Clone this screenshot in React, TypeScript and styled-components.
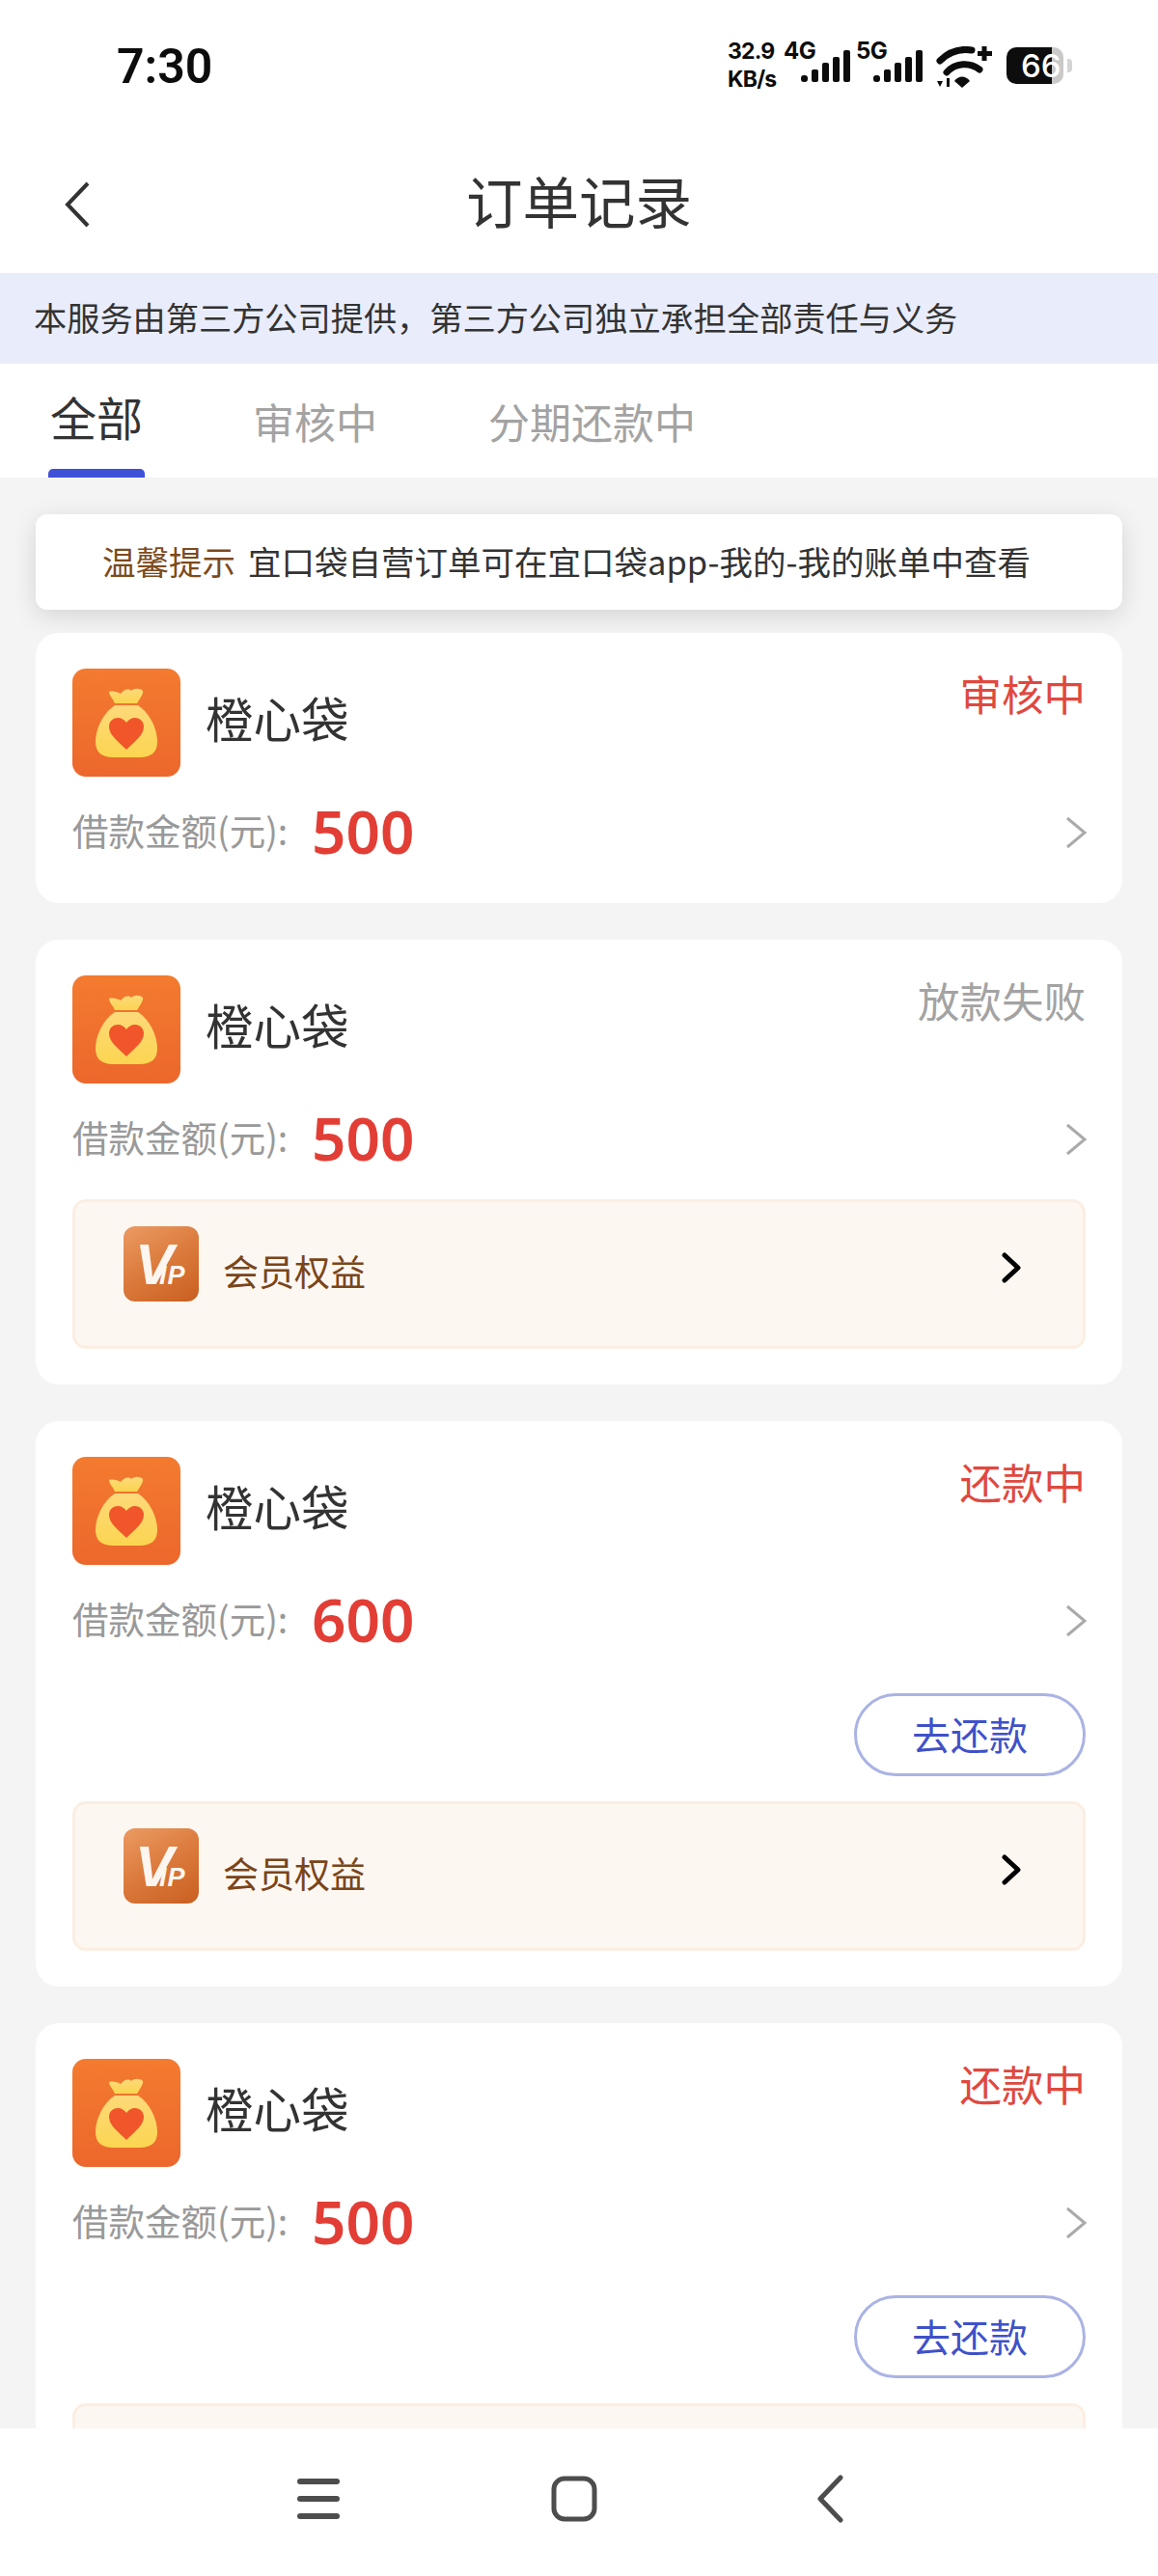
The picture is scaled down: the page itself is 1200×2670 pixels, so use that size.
import React from "react";
import styled, { createGlobalStyle } from "styled-components";

const Global = createGlobalStyle`
  html, body { margin: 0; padding: 0; background: #fff; }
  * { box-sizing: border-box; }
`;

const CJK = `"Noto Sans CJK SC", "Noto Sans", sans-serif`;

const Screen = styled.div`
  width: 1200px;
  height: 2670px;
  display: flex;
  flex-direction: column;
  overflow: hidden;
  background: #f4f4f4;
  font-family: ${CJK};
`;

const StatusBar = styled.div`
  height: 140px;
  flex: none;
  background: #fff;
  display: flex;
  align-items: flex-start;
  justify-content: space-between;
  padding: 44px 89px 0 121px;
  font-family: Inter, sans-serif;
  color: #0c0c0c;
`;

const Time = styled.div`
  font-family: Roboto, sans-serif;
  font-size: 50px;
  line-height: 50px;
  font-weight: 600;
`;

const StatusIcons = styled.div`
  display: flex;
  align-items: flex-start;
  gap: 6px;
`;

const Speed = styled.div`
  width: 52px;
  display: flex;
  flex-direction: column;
  gap: 5px;
  font-size: 23px;
  line-height: 24px;
  font-weight: 700;
  white-space: nowrap;
  letter-spacing: -0.8px;
  margin-top: -3px;
`;

const Signal = styled.div`
  position: relative;
  width: 69px;
  height: 41px;
  display: flex;
  justify-content: flex-end;
  align-items: flex-end;
`;

const NetLabel = styled.span`
  position: absolute;
  left: 0;
  top: -3px;
  font-size: 24px;
  line-height: 24px;
  font-weight: 700;
  letter-spacing: -0.6px;
`;

const WifiWrap = styled.div`
  display: flex;
  margin: 4px 0 0 8px;
`;

const Battery = styled.div`
  position: relative;
  width: 68px;
  height: 38px;
  margin: 5px 0 0 9px;
`;

const BatteryBody = styled.div`
  width: 59px;
  height: 38px;
  border-radius: 10px;
  overflow: hidden;
  background: linear-gradient(90deg, #0d0d0d 0 47px, #c9c9c9 47px 59px);
  color: #fff;
  font-size: 33px;
  line-height: 38px;
  font-weight: 500;
  padding-left: 15px;
  white-space: nowrap;
`;

const BatteryNub = styled.div`
  position: absolute;
  right: 0;
  top: 12px;
  width: 5px;
  height: 14px;
  border-radius: 0 4px 4px 0;
  background: #d4d4d4;
`;

const NavBar = styled.div`
  position: relative;
  height: 143px;
  flex: none;
  background: #fff;
  display: flex;
  align-items: center;
  justify-content: center;
  padding-bottom: 10px;
`;

const BackButton = styled.div`
  position: absolute;
  left: 66px;
  top: 48px;
  display: flex;
`;

const Title = styled.h1`
  margin: 0;
  font-size: 58.5px;
  line-height: 80px;
  font-weight: 400;
  color: #333;
`;

const Notice = styled.div`
  height: 94px;
  flex: none;
  background: #e9edfb;
  color: #333;
  font-size: 34.2px;
  line-height: 90px;
  padding-left: 35px;
  white-space: nowrap;
`;

const Tabs = styled.div`
  height: 118px;
  flex: none;
  background: #fff;
  display: flex;
  align-items: flex-start;
  padding-left: 50px;
  gap: 115px;
`;

const Tab = styled.div<{ $active?: boolean }>`
  position: relative;
  height: 118px;
  padding: ${(p) => (p.$active ? "24px 2px 0" : "29px 0 0")};
  margin-right: ${(p) => (p.$active ? "-3px" : "0")};
  font-size: ${(p) => (p.$active ? "48px" : "43px")};
  line-height: 60px;
  color: ${(p) => (p.$active ? "#333" : "#a3a3a3")};
`;

const TabLine = styled.div`
  position: absolute;
  left: 0;
  right: 0;
  bottom: 0;
  height: 9px;
  border-radius: 5px 5px 0 0;
  background: #3f51d6;
`;

const List = styled.div`
  flex: 1;
  min-height: 0;
  overflow: hidden;
  padding: 38px 37px 0;
  display: flex;
  flex-direction: column;
`;

const Tip = styled.div`
  flex: none;
  height: 99px;
  margin-bottom: 24px;
  padding: 0 0 4px 69px;
  border-radius: 12px;
  background: #fff;
  box-shadow: 0 6px 26px rgba(0, 0, 0, 0.13);
  display: flex;
  align-items: center;
  gap: 13px;
  font-size: 34.5px;
  color: #333;
  white-space: nowrap;
`;

const TipLabel = styled.span`
  color: #7c4a1c;
`;

const Card = styled.div`
  flex: none;
  display: flex;
  flex-direction: column;
  background: #fff;
  border-radius: 24px;
  padding: 37px 38px 37px;
  margin-bottom: 38px;
`;

const CardHead = styled.div`
  display: flex;
  align-items: flex-start;
`;

const LogoWrap = styled.div`
  width: 112px;
  height: 112px;
  flex: none;
  display: flex;
`;

const CardName = styled.div`
  font-size: 49.5px;
  line-height: 70px;
  margin: 16px 0 0 26px;
  color: #333;
  flex: 1;
`;

const Status = styled.div<{ $color: string }>`
  font-size: 43.5px;
  line-height: 56px;
  margin-top: -2px;
  color: ${(p) => p.$color};
`;

const AmountRow = styled.div`
  display: flex;
  align-items: center;
  height: 60px;
  margin: 28px 0 6px;
`;

const AmountLabel = styled.div`
  font-size: 37.5px;
  line-height: 60px;
  margin-top: -6px;
  color: #999;
  white-space: nowrap;
  width: 248px;
`;

const AmountValue = styled.div`
  flex: 1;
  font-family: "Noto Sans", sans-serif;
  font-weight: 600;
  font-size: 62px;
  line-height: 60px;
  margin-top: -4px;
  color: #e23e35;
`;

const Chevron = styled.svg`
  flex: none;
  display: block;
`;

const VipChevron = styled(Chevron)`
  margin-top: -13px;
`;

const ActionRow = styled.div`
  display: flex;
  justify-content: flex-end;
  margin-top: 39px;
`;

const PayButton = styled.div`
  width: 240px;
  height: 86px;
  border: 3px solid #aab3e4;
  border-radius: 43px;
  display: flex;
  align-items: center;
  justify-content: center;
  padding-bottom: 3px;
  font-size: 40px;
  color: #3f51c9;
`;

const VipBox = styled.div`
  height: 155px;
  margin-top: 26px;
  padding: 0 64px 0 50px;
  display: flex;
  align-items: center;
  background: #fdf7f1;
  border: 3px solid #fbeee2;
  border-radius: 14px;
`;

const VipIcon = styled.div`
  position: relative;
  width: 78px;
  height: 78px;
  flex: none;
  margin-top: -21px;
  border-radius: 12px;
  overflow: hidden;
  background: linear-gradient(150deg, #eb9b63 0%, #db7a3c 50%, #c95f20 100%);
  color: #fdf6f0;
  font-family: "Liberation Sans", sans-serif;
  font-weight: 700;
  font-style: italic;
`;

const VipV = styled.span`
  position: absolute;
  left: 12px;
  top: 10px;
  font-size: 60px;
  line-height: 60px;
`;

const VipIP = styled.span`
  position: absolute;
  left: 37px;
  top: 38px;
  font-size: 27px;
  line-height: 27px;
  letter-spacing: 1px;
`;

const VipText = styled.div`
  flex: 1;
  margin: -8px 0 0 25px;
  font-size: 37px;
  line-height: 50px;
  color: #7a4519;
`;

const BottomBar = styled.div`
  height: 153px;
  flex: none;
  background: #fff;
  display: grid;
  grid-template-columns: repeat(3, 265px);
  justify-content: center;
  justify-items: center;
  align-items: center;
  padding: 0 10px 8px 0;
`;

const BagLogo = ({ id }: { id: string }) => (
  <svg width="112" height="112" viewBox="0 0 112 112">
    <defs>
      <linearGradient id={`${id}bg`} x1="0" y1="0" x2="0" y2="1">
        <stop offset="0" stopColor="#f37b2f" />
        <stop offset="1" stopColor="#ec672c" />
      </linearGradient>
      <linearGradient id={`${id}bag`} x1="0" y1="0" x2="0" y2="1">
        <stop offset="0" stopColor="#fdd97a" />
        <stop offset="1" stopColor="#fbd550" />
      </linearGradient>
    </defs>
    <rect width="112" height="112" rx="14" fill={`url(#${id}bg)`} />
    <path
      d="M38 24c4-1 9 0 12 2 3-4 8-6 11-3 3-3 9-3 12 0 1 3-3 8-6 13H44c-2-5-6-8-6-12z"
      fill={`url(#${id}bag)`}
    />
    <path
      d="M44 38h24c12 8 20 24 20 38 0 11-7 16-18 16H42C31 92 24 87 24 76c0-14 8-30 20-38z"
      fill={`url(#${id}bag)`}
    />
    <path
      d="M56 84C47 75 38 69 38 60c0-6 5-9 9-9 4 0 7 2 9 5 2-3 5-5 9-5 5 0 9 4 9 9 0 9-9 15-18 24z"
      fill="#f0562a"
    />
  </svg>
);

const GrayChevron = () => (
  <Chevron width="24" height="34" viewBox="0 0 24 34" style={{ marginRight: -2 }}>
    <path d="M3 2l18 15L3 32" fill="none" stroke="#aaa" strokeWidth="3" />
  </Chevron>
);

const BlackChevron = () => (
  <VipChevron width="20" height="32" viewBox="0 0 20 32">
    <path d="M3 3l14 13L3 29" fill="none" stroke="#000" strokeWidth="5" strokeLinecap="round" strokeLinejoin="round" />
  </VipChevron>
);

const SignalBars = () => (
  <svg width="51" height="33" viewBox="0 0 51 33">
    <rect x="0" y="26" width="7" height="7" rx="3" fill="#0c0c0c" />
    <rect x="11" y="20" width="7" height="13" rx="2" fill="#0c0c0c" />
    <rect x="22" y="13" width="7" height="20" rx="2" fill="#0c0c0c" />
    <rect x="33" y="7" width="7" height="26" rx="2" fill="#0c0c0c" />
    <rect x="44" y="0" width="7" height="33" rx="2" fill="#0c0c0c" />
  </svg>
);

const Wifi = () => (
  <svg width="58" height="44" viewBox="0 0 58 44">
    <g fill="none" stroke="#0c0c0c" strokeLinecap="round">
      <path d="M4 15C13 6 25 2 37 4" strokeWidth="7" />
      <path d="M11 27C20 17 35 16 45 24" strokeWidth="7" />
    </g>
    <path d="M19 36c4-6 12-6 16 0l-8 7z" fill="#0c0c0c" />
    <path d="M50 0v15M43 7.500h15" stroke="#0c0c0c" strokeWidth="5" />
    <path d="M1 36h6l-3 6zM11 33h3v9h-3z" fill="#0c0c0c" />
  </svg>
);

const Order = ({
  id,
  status,
  color,
  amount,
  pay,
  vip,
}: {
  id: string;
  status: string;
  color: string;
  amount: string;
  pay?: boolean;
  vip?: boolean;
}) => (
  <Card>
    <CardHead>
      <LogoWrap>
        <BagLogo id={id} />
      </LogoWrap>
      <CardName>橙心袋</CardName>
      <Status $color={color}>{status}</Status>
    </CardHead>
    <AmountRow>
      <AmountLabel>借款金额(元):</AmountLabel>
      <AmountValue>{amount}</AmountValue>
      <GrayChevron />
    </AmountRow>
    {pay && (
      <ActionRow>
        <PayButton>去还款</PayButton>
      </ActionRow>
    )}
    {vip && (
      <VipBox>
        <VipIcon>
          <VipV>V</VipV>
          <VipIP>IP</VipIP>
        </VipIcon>
        <VipText>会员权益</VipText>
        <BlackChevron />
      </VipBox>
    )}
  </Card>
);

export default function App() {
  return (
    <Screen>
      <Global />
      <StatusBar>
        <Time>7:30</Time>
        <StatusIcons>
          <Speed>
            <span>32.9</span>
            <span>KB/s</span>
          </Speed>
          <Signal>
            <NetLabel>4G</NetLabel>
            <SignalBars />
          </Signal>
          <Signal>
            <NetLabel>5G</NetLabel>
            <SignalBars />
          </Signal>
          <WifiWrap>
            <Wifi />
          </WifiWrap>
          <Battery>
            <BatteryBody>66</BatteryBody>
            <BatteryNub />
          </Battery>
        </StatusIcons>
      </StatusBar>
      <NavBar>
        <BackButton>
          <svg width="28" height="48" viewBox="0 0 28 48">
            <path d="M25 2L4 24l21 22" fill="none" stroke="#333" strokeWidth="4" />
          </svg>
        </BackButton>
        <Title>订单记录</Title>
      </NavBar>
      <Notice>本服务由第三方公司提供，第三方公司独立承担全部责任与义务</Notice>
      <Tabs>
        <Tab $active>
          全部
          <TabLine />
        </Tab>
        <Tab>审核中</Tab>
        <Tab>分期还款中</Tab>
      </Tabs>
      <List>
        <Tip>
          <TipLabel>温馨提示</TipLabel>
          <span>宜口袋自营订单可在宜口袋app-我的-我的账单中查看</span>
        </Tip>
        <Order id="a" status="审核中" color="#e0483e" amount="500" />
        <Order id="b" status="放款失败" color="#a3a3a3" amount="500" vip />
        <Order id="c" status="还款中" color="#e0483e" amount="600" pay vip />
        <Order id="d" status="还款中" color="#e0483e" amount="500" pay vip />
      </List>
      <BottomBar>
        <svg width="46" height="44" viewBox="0 0 46 44">
          <g fill="#4d4d4d">
            <rect x="1" y="1" width="44" height="6" rx="3" />
            <rect x="1" y="19" width="44" height="6" rx="3" />
            <rect x="1" y="37" width="44" height="6" rx="3" />
          </g>
        </svg>
        <svg width="48" height="48" viewBox="0 0 48 48">
          <rect x="3" y="3" width="42" height="42" rx="11" fill="none" stroke="#4d4d4d" strokeWidth="5" />
        </svg>
        <svg width="30" height="50" viewBox="0 0 30 50">
          <path d="M26 3L5 25l21 22" fill="none" stroke="#4d4d4d" strokeWidth="5" strokeLinecap="round" strokeLinejoin="round" />
        </svg>
      </BottomBar>
    </Screen>
  );
}
